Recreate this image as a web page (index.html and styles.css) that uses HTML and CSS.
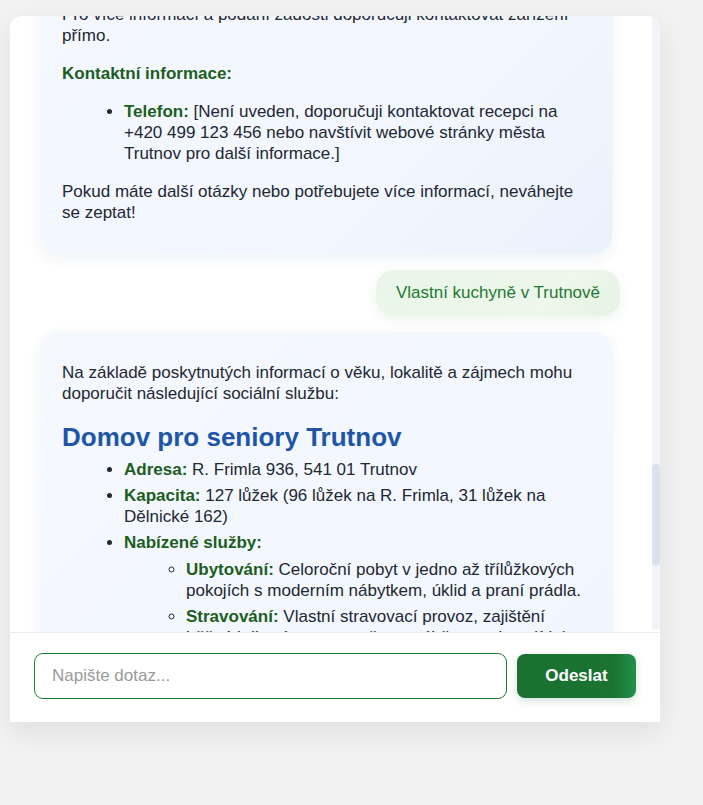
FILE: index.html
```html
<!DOCTYPE html>
<html lang="cs">
<head>
<meta charset="utf-8">
<title>Chat</title>
<link rel="stylesheet" href="styles.css">
</head>
<body>
<div class="chat">
  <div class="chat-main">
    <div class="messages">
      <div class="msg bot">
        <p>Domov pro seniory Trutnov poskytuje pobytové služby seniorům, kteří potřebují pravidelnou pomoc jiné osoby.</p>
        <p>Služba zahrnuje ubytování, stravování, pomoc při péči o vlastní osobu a zprostředkování kontaktu se společenským prostředím.</p>
        <p class="anchor">Pro více informací a podání žádosti doporučuji kontaktovat zařízení přímo.</p>
        <p><strong>Kontaktní informace:</strong></p>
        <ul>
          <li><strong>Telefon:</strong> [Není uveden, doporučuji kontaktovat recepci na +420 499 123 456 nebo navštívit webové stránky města Trutnov pro další informace.]</li>
        </ul>
        <p>Pokud máte další otázky nebo potřebujete více informací, neváhejte se zeptat!</p>
      </div>
      <div class="msg user">Vlastní kuchyně v Trutnově</div>
      <div class="msg bot">
        <p>Na základě poskytnutých informací o věku, lokalitě a zájmech mohu doporučit následující sociální službu:</p>
        <h2>Domov pro seniory Trutnov</h2>
        <ul>
          <li><strong>Adresa:</strong> R. Frimla 936, 541 01 Trutnov</li>
          <li><strong>Kapacita:</strong> 127 lůžek (96 lůžek na R. Frimla, 31 lůžek na Dělnické 162)</li>
          <li><strong>Nabízené služby:</strong>
            <ul>
              <li><strong>Ubytování:</strong> Celoroční pobyt v jedno až třílůžkových pokojích s moderním nábytkem, úklid a praní prádla.</li>
              <li><strong>Stravování:</strong> Vlastní stravovací provoz, zajištění běžné i dietní stravy, možnost výběru ze dvou jídel.</li>
              <li><strong>Zdravotní péče:</strong> Nepřetržitá ošetřovatelská péče, rehabilitace a spolupráce s praktickým lékařem.</li>
              <li><strong>Aktivizace:</strong> Volnočasové aktivity, kulturní akce, výlety a trénink paměti.</li>
            </ul>
          </li>
        </ul>
        <p>Vlastní kuchyně zajišťuje čerstvě připravená jídla každý den přímo v zařízení.</p>
        <p>Pokud máte další otázky nebo potřebujete více informací, neváhejte se zeptat!</p>
      </div>
    </div>
    <div class="scrollbar"><div class="thumb"></div></div>
  </div>
  <form class="composer">
    <input class="field" type="text" placeholder="Napište dotaz..." autofocus>
    <button class="send" type="button">Odeslat</button>
  </form>
</div>
<script src="script.js"></script>
</body>
</html>
```
FILE: styles.css
```css
html, body {
  margin: 0;
  padding: 0;
}
body {
  background: #f2f2f2;
  font-family: "Liberation Sans", Arial, Helvetica, sans-serif;
  padding: 16px 0 0 10px;
  height: 805px;
  box-sizing: border-box;
}
.chat {
  width: 650px;
  height: 706px;
  background: #ffffff;
  border-radius: 12px 12px 0 0;
  box-shadow: 0 10px 30px rgba(0, 0, 0, 0.08);
  display: flex;
  flex-direction: column;
  overflow: hidden;
}
.chat-main {
  display: flex;
  height: 616px;
}
.messages {
  flex: 1;
  overflow: hidden;
  padding: 0 32px 0 30px;
  display: flex;
  flex-direction: column;
  gap: 16px;
}
.msg {
  font-size: 17px;
  line-height: 21px;
  color: #222831;
  border-radius: 18px;
  flex-shrink: 0;
}
.msg.bot {
  align-self: flex-start;
  width: calc(100% - 8px);
  box-sizing: border-box;
  padding: 13px 22px 14px;
  background: linear-gradient(135deg, #f5f8ff 0%, #f2f6fe 70%, #ebf1fb 100%);
  box-shadow: 0 4px 14px rgba(30, 60, 120, 0.07);
}
.msg.bot p {
  margin: 17px 0;
}
.msg.bot strong {
  color: #1b5e20;
}
.msg.bot h2 {
  font-size: 26px;
  line-height: 31px;
  margin: 18px 0 6px;
  color: #1d56a8;
}
.msg.bot ul {
  margin: 17px 0;
  padding-left: 62px;
}
.msg.bot h2 + ul {
  margin-top: 0;
}
.msg.bot ul ul {
  margin: 6px 0 0;
  list-style-type: circle;
}
.msg.bot li {
  margin-bottom: 5px;
}
.msg.user {
  align-self: flex-end;
  padding: 12px 20px;
  line-height: 22px;
  color: #1e7a32;
  background: linear-gradient(135deg, #e9f6e8 0%, #edf7ea 70%, #e6f3e4 100%);
  box-shadow: 0 4px 12px rgba(40, 100, 40, 0.08);
}
.scrollbar {
  width: 8px;
  background: #f1f4f8;
  border-radius: 0 0 4px 4px;
  margin-bottom: 2px;
  flex-shrink: 0;
}
.thumb {
  margin-top: 448px;
  height: 102px;
  background: #dbe2ec;
  border-radius: 4px;
}
.composer {
  margin: 0;
  border-top: 1px solid #e9ebef;
  padding: 20px 24px 23px;
  display: flex;
  align-items: center;
  gap: 10px;
}
.field {
  flex: 1;
  height: 46px;
  box-sizing: border-box;
  border: 1px solid #1f7a35;
  border-radius: 9px;
  padding: 0 17px;
  font-family: "Liberation Sans", Arial, sans-serif;
  font-size: 17px;
  color: #222;
  caret-color: #2f6bf0;
  outline: none;
}
.field::placeholder {
  color: #9a9a9a;
}
.send {
  width: 119px;
  height: 44px;
  border: none;
  border-radius: 8px;
  background: linear-gradient(90deg, #1a7130 0%, #1a7331 80%, #21904a 100%);
  color: #ffffff;
  font-family: "Liberation Sans", Arial, sans-serif;
  font-weight: bold;
  font-size: 17px;
  box-shadow: 0 3px 8px rgba(20, 90, 40, 0.18);
}
```
FILE: script.js
```js
var m = document.querySelector('.messages');
var a = document.querySelector('.anchor');
m.scrollTop = a.getBoundingClientRect().top - m.getBoundingClientRect().top + 12;
```
